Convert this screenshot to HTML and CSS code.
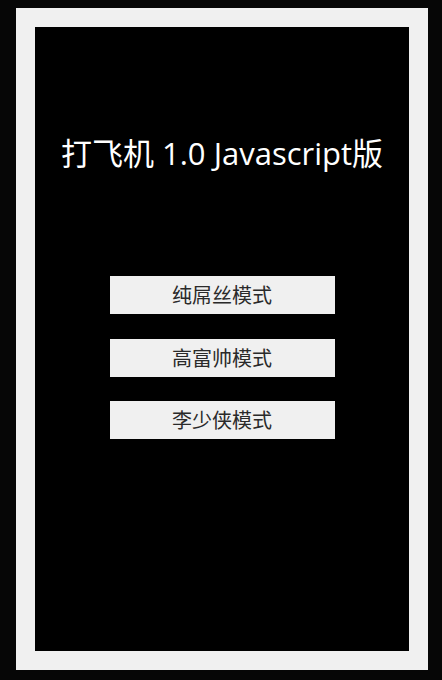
FILE: index.html
```html
<!DOCTYPE html>
<html lang="zh">
<head>
<meta charset="utf-8">
<title>打飞机 1.0 Javascript版</title>
<link rel="stylesheet" href="styles.css">
</head>
<body>
<div class="frame">
  <div class="stage">
    <h1 class="title">打飞机 1.0 Javascript版</h1>
    <div class="menu">
      <button class="mode">纯屌丝模式</button>
      <button class="mode">高富帅模式</button>
      <button class="mode">李少侠模式</button>
    </div>
  </div>
</div>
</body>
</html>
```
FILE: styles.css
```css
html, body {
  margin: 0;
  padding: 0;
  background: #060606;
}
body {
  padding: 8px 0 0 16px;
  font-family: "Open Sans", "Noto Sans CJK SC", sans-serif;
}
.frame {
  width: 374px;
  height: 624px;
  border: 19px solid #f0f0f0;
  background: #000;
}
.stage {
  display: flex;
  flex-direction: column;
  align-items: center;
  height: 100%;
}
.title {
  margin: 106px 0 0;
  color: #fff;
  font-size: 31px;
  font-weight: normal;
  line-height: 40px;
  white-space: nowrap;
}
.menu {
  margin-top: 103px;
  display: flex;
  flex-direction: column;
  gap: 24.5px;
}
.mode {
  width: 225px;
  height: 38px;
  border: 0;
  padding: 0;
  background: #f0f0f0;
  color: #2a2a2a;
  font-family: "Noto Sans CJK SC", sans-serif;
  font-size: 20px;
  font-weight: normal;
  line-height: 38px;
}
```
